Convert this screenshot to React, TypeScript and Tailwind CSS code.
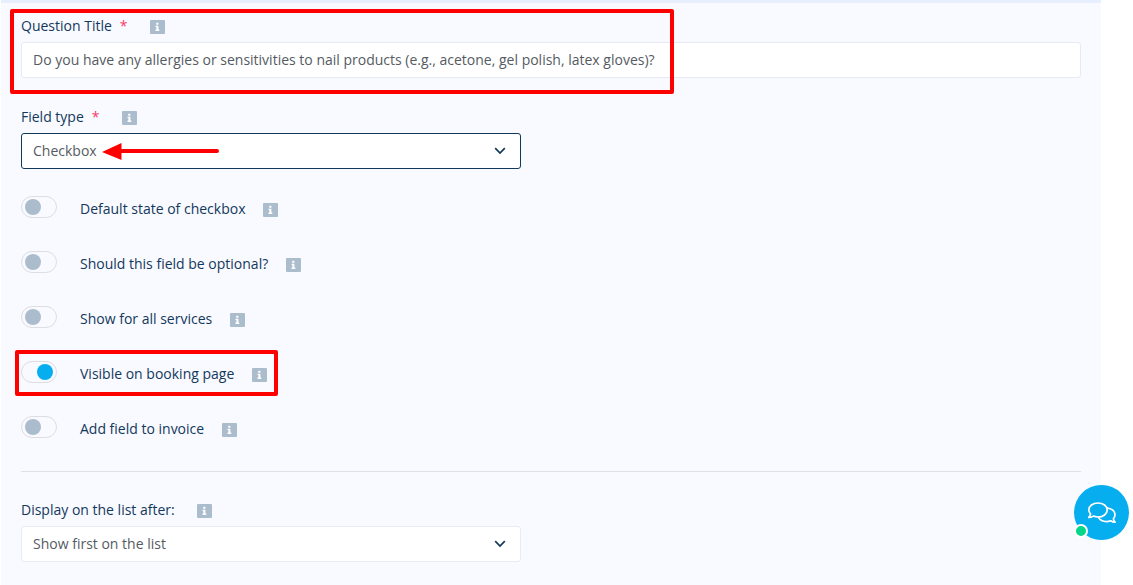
import { useState } from "react";
import type { ReactNode } from "react";

const fieldTypes = ["Checkbox", "Text", "Text area", "Select"];
const listPositions = ["Show first on the list", "Show last on the list"];

const initialToggles = [
  { id: "default-state", label: "Default state of checkbox", on: false },
  { id: "optional", label: "Should this field be optional?", on: false },
  { id: "all-services", label: "Show for all services", on: false },
  { id: "booking-page", label: "Visible on booking page", on: true, marked: true },
  { id: "invoice", label: "Add field to invoice", on: false },
];

function InfoIcon() {
  return (
    <svg width="15" height="14" viewBox="0 0 15 14" className="shrink-0" aria-hidden="true">
      <rect width="15" height="14" rx="1" fill="#abbccd" />
      <path d="M6.2 2.800h2.200v1.900H6.200zM5.500 5.700h2.900v3.900h.9v1.300H5.500V9.600h.9V7h-.9z" fill="#fff" />
    </svg>
  );
}

function FieldLabel({
  htmlFor,
  required,
  children,
}: {
  htmlFor: string;
  required?: boolean;
  children: ReactNode;
}) {
  return (
    <div className="flex items-center h-5 mb-1.5">
      <label htmlFor={htmlFor} className="text-[#12385c]">
        {children}
        {required && <span className="ml-2 text-[#f8396a]">*</span>}
      </label>
      <span className="ml-[22px] mt-0.5">
        <InfoIcon />
      </span>
    </div>
  );
}

function SelectBox({
  id,
  options,
  active,
}: {
  id: string;
  options: string[];
  active?: boolean;
}) {
  return (
    <div className="relative w-full max-w-[500px]">
      <select
        id={id}
        className={`block w-full h-9 appearance-none rounded-[3px] border bg-white pl-[11px] pr-10 text-[#555b62] outline-none ${
          active ? "border-[#12385c]" : "border-[#e5ebf7]"
        }`}
      >
        {options.map((option) => (
          <option key={option}>{option}</option>
        ))}
      </select>
      <svg
        width="12"
        height="8"
        viewBox="0 0 12 8"
        className="absolute right-[15px] top-[14px] pointer-events-none"
        aria-hidden="true"
      >
        <path d="M1.2 1.2 6 6l4.8-4.8" fill="none" stroke="#12385c" strokeWidth="1.7" />
      </svg>
    </div>
  );
}

function Toggle({
  id,
  label,
  on,
  marked,
  onChange,
}: {
  id: string;
  label: string;
  on: boolean;
  marked?: boolean;
  onChange: () => void;
}) {
  return (
    <div className="relative flex items-start w-fit h-[26px]">
      <input
        id={id}
        type="checkbox"
        role="switch"
        checked={on}
        onChange={onChange}
        className="appearance-none w-9 h-[22px] shrink-0 rounded-full border border-[#dcdee3] px-[3px] py-0.5 before:block before:size-4 before:rounded-full before:bg-[#abbccd] checked:before:translate-x-3 checked:before:bg-[#06adef]"
      />
      <label htmlFor={id} className="ml-[23px] leading-[26px] text-[#12385c]">
        {label}
      </label>
      <span className="ml-[18px] mt-[7px]">
        <InfoIcon />
      </span>
      {marked && (
        <span className="absolute -left-1.5 -right-[11px] -top-[11px] -bottom-[9px] rounded-xs border-4 border-[#fe0000] pointer-events-none" />
      )}
    </div>
  );
}

export default function App() {
  const [title, setTitle] = useState(
    "Do you have any allergies or sensitivities to nail products (e.g., acetone, gel polish, latex gloves)?"
  );
  const [toggles, setToggles] = useState(initialToggles);

  function flip(id: string) {
    setToggles(toggles.map((t) => (t.id === id ? { ...t, on: !t.on } : t)));
  }

  return (
    <div className="min-h-screen flex bg-white pl-px pr-8 font-['Open_Sans','Noto_Sans',sans-serif] text-sm">
      <form className="flex-1 border-t-3 border-[#e7eefe] bg-[#f9faff] px-5 pt-[13px] pb-5">
        <div className="relative">
          <FieldLabel htmlFor="title" required>
            Question Title
          </FieldLabel>
          <input
            id="title"
            type="text"
            value={title}
            onChange={(e) => setTitle(e.target.value)}
            className="block w-full h-9 rounded-[3px] border border-[#e7e9f4] bg-white px-[11px] pb-0.5 text-[#555b62] outline-none"
          />
          <span className="absolute -left-[11px] -top-[7px] w-[664px] h-[85px] rounded-xs border-4 border-[#fe0000] pointer-events-none" />
        </div>

        <div className="relative mt-[29px]">
          <FieldLabel htmlFor="type" required>
            Field type
          </FieldLabel>
          <SelectBox id="type" options={fieldTypes} active />
          <svg
            width="118"
            height="18"
            viewBox="0 0 118 18"
            className="absolute left-20 bottom-2 pointer-events-none"
            aria-hidden="true"
          >
            <path d="M20 8h96" stroke="#fe0000" strokeWidth="4" strokeLinecap="round" />
            <path d="M1 9 20.500 0v17z" fill="#fe0000" />
          </svg>
        </div>

        <div className="flex flex-col gap-[29px] mt-[27px]">
          {toggles.map((t) => (
            <Toggle key={t.id} {...t} onChange={() => flip(t.id)} />
          ))}
        </div>

        <hr className="mt-[29px] mb-7 border-[#dee1e6]" />

        <FieldLabel htmlFor="position">Display on the list after:</FieldLabel>
        <SelectBox id="position" options={listPositions} />
      </form>

      {/* Chat launcher */}
      <button
        type="button"
        aria-label="Open chat"
        className="fixed right-1 bottom-[45px] size-[55px] rounded-full bg-[#06adef]"
      >
        <svg
          width="30"
          height="26"
          viewBox="0 0 30 26"
          fill="none"
          stroke="#fff"
          strokeWidth="1.7"
          strokeLinejoin="round"
          strokeLinecap="round"
          className="mx-auto"
          aria-hidden="true"
        >
          <path d="M11 3c5.200 0 9.200 3.100 9.200 7s-4 7-9.200 7c-1.700 0-3.300-.3-4.600-.9-1.400.9-3 1.400-4.700 1.400 1-1.100 1.700-2.200 1.900-3.500C2.500 12.900 1.800 11.500 1.800 10c0-3.900 4-7 9.200-7z" />
          <path d="M20.300 8.200c4.500.2 7.700 3 7.700 6.600 0 1.500-.6 2.900-1.600 4 .2 1.200.8 2.300 1.700 3.400-1.700 0-3.200-.5-4.500-1.400-1.200.5-2.600.8-4.100.8-3.600 0-6.600-1.600-8-4.200" />
        </svg>
        <span className="absolute left-0 bottom-0.5 size-[14px] rounded-full border-2 border-white bg-[#05d68a]" />
      </button>
    </div>
  );
}
